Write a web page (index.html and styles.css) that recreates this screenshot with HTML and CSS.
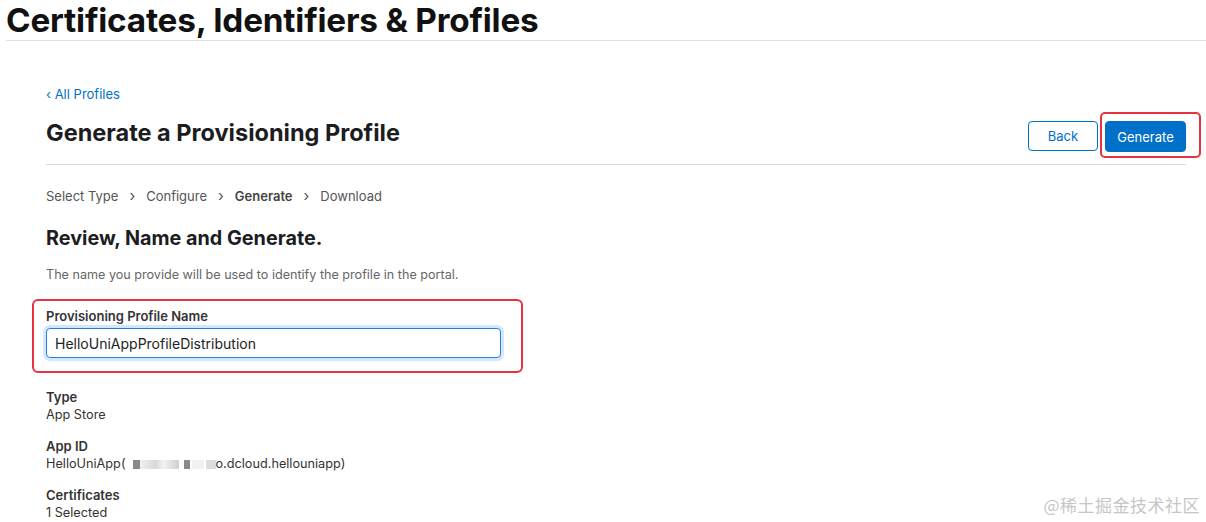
FILE: index.html
```html
<!DOCTYPE html>
<html lang="en">
<head>
<meta charset="utf-8">
<title>Generate a Provisioning Profile</title>
<link rel="stylesheet" href="styles.css">
</head>
<body>
<header class="page-header">
  <h1 class="page-title">Certificates, Identifiers &amp; Profiles</h1>
</header>
<main class="content">
  <a class="back-link" href="#">‹ All Profiles</a>
  <div class="title-row">
    <h2 class="section-title">Generate a Provisioning Profile</h2>
    <div class="actions">
      <button class="btn btn-secondary">Back</button>
      <div class="highlight highlight-btn">
        <button class="btn btn-primary">Generate</button>
      </div>
    </div>
  </div>
  <nav class="steps">
    <span class="step">Select Type</span>
    <span class="sep">›</span>
    <span class="step">Configure</span>
    <span class="sep">›</span>
    <span class="step step-current">Generate</span>
    <span class="sep">›</span>
    <span class="step">Download</span>
  </nav>
  <h3 class="form-title">Review, Name and Generate.</h3>
  <p class="hint">The name you provide will be used to identify the profile in the portal.</p>
  <div class="highlight highlight-field">
    <label class="field-label" for="pname">Provisioning Profile Name</label>
    <input class="field-input" id="pname" type="text" value="HelloUniAppProfileDistribution">
  </div>
  <dl class="details">
    <div class="detail">
      <dt>Type</dt>
      <dd>App Store</dd>
    </div>
    <div class="detail">
      <dt>App ID</dt>
      <dd>HelloUniApp(<span class="redact r1"></span><span class="redact r2"></span><span class="redact r3"></span><span class="redact r4"></span><span class="redact r5"></span>o.dcloud.hellouniapp)</dd>
    </div>
    <div class="detail">
      <dt>Certificates</dt>
      <dd>1 Selected</dd>
    </div>
  </dl>
</main>
<div class="watermark">@稀土掘金技术社区</div>
</body>
</html>
```

FILE: styles.css
```css
* { box-sizing: border-box; }
html, body {
  margin: 0;
  padding: 0;
  background: #fff;
  font-family: "Inter", "Liberation Sans", "Noto Sans CJK SC", sans-serif;
  color: #1d1d1f;
  width: 1206px;
  height: 522px;
  overflow: hidden;
}
.page-header {
  margin-left: 6px;
  border-bottom: 1px solid #e0e0e3;
}
.page-title {
  margin: 0;
  font-size: 33.3px;
  line-height: 40px;
  font-weight: 700;
  letter-spacing: -0.2px;
  color: #111;
}
.content {
  padding: 44px 20px 0 46px;
}
.back-link {
  display: block;
  font-size: 13px;
  line-height: 18px;
  color: #0070c9;
  text-decoration: none;
}
.title-row {
  display: flex;
  justify-content: space-between;
  align-items: flex-start;
  height: 62px;
  border-bottom: 1px solid #d6d6d6;
}
.section-title {
  margin: 15px 0 0;
  font-size: 23.5px;
  line-height: 30px;
  font-weight: 700;
  color: #1d1d1f;
}
.actions {
  display: flex;
  align-items: flex-start;
  margin-top: 9px;
  margin-right: -15px;
}
.btn {
  font-family: inherit;
  font-size: 13px;
  height: 30px;
  border-radius: 4px;
  padding: 0;
  cursor: pointer;
}
.btn-secondary {
  margin-top: 9px;
  margin-right: 2px;
  width: 70px;
  background: #fff;
  color: #0070c9;
  border: 1px solid #0070c9;
}
.btn-primary {
  width: 81px;
  height: 31px;
  background: #0070c9;
  color: #fff;
  border: 1px solid #0070c9;
}
.highlight {
  border: 2px solid #e8323f;
  border-radius: 5px;
}
.highlight-btn {
  padding: 7px 13px 4px 3px;
}
.steps {
  display: flex;
  align-items: center;
  margin-top: 21px;
  font-size: 13px;
  line-height: 20px;
  color: #555;
}
.sep {
  margin: 0 11px 0 11px;
  font-size: 15px;
  color: #555;
}
.step-current {
  font-weight: 600;
  color: #444;
}
.form-title {
  margin: 19px 0 0;
  font-size: 19.8px;
  line-height: 26px;
  font-weight: 700;
  color: #1d1d1f;
}
.hint {
  margin: 16px 0 0;
  font-size: 12.6px;
  line-height: 16px;
  color: #666;
}
.highlight-field {
  width: 491px;
  margin: 16px 0 0 -14px;
  padding: 7px 20px 13px 12px;
  border-radius: 6px;
}
.field-label {
  display: block;
  font-size: 13px;
  line-height: 16px;
  font-weight: 600;
  color: #333;
}
.field-input {
  display: block;
  margin-top: 4px;
  width: 455px;
  height: 30px;
  padding: 0 8px;
  font-family: inherit;
  font-size: 14px;
  color: #222;
  border: 1px solid #2a7fd4;
  border-radius: 4px;
  box-shadow: 0 0 0 3px rgba(0, 125, 250, 0.18);
  outline: none;
}
.details {
  margin: 15px 0 0;
}
.detail {
  margin-bottom: 13px;
}
.detail dt {
  font-size: 13px;
  line-height: 18px;
  font-weight: 600;
  color: #333;
}
.detail dd {
  margin: 0;
  font-size: 12.7px;
  line-height: 18px;
  color: #333;
}
.redact {
  display: inline-block;
  height: 9px;
  vertical-align: -1px;
  background: #e4e4e4;
}
.r1 { width: 7px; margin-left: 7px; background: #8a8a8a; }
.r2 { width: 39px; background: linear-gradient(90deg, #f0f0f0, #d8d8d8 40%, #f2f2f2 60%, #cfcfcf); }
.r3 { width: 6px; margin-left: 5px; background: #8a8a8a; }
.r4 { width: 12px; margin-left: 2px; background: #f1f1f1; }
.r5 { width: 10px; margin-left: 2px; background: #dcdcdc; }
.watermark {
  position: absolute;
  right: 6px;
  bottom: 5px;
  font-size: 17px;
  color: #c6c6c6;
  font-family: "Noto Sans CJK SC", sans-serif;
  letter-spacing: 0.5px;
}
```
